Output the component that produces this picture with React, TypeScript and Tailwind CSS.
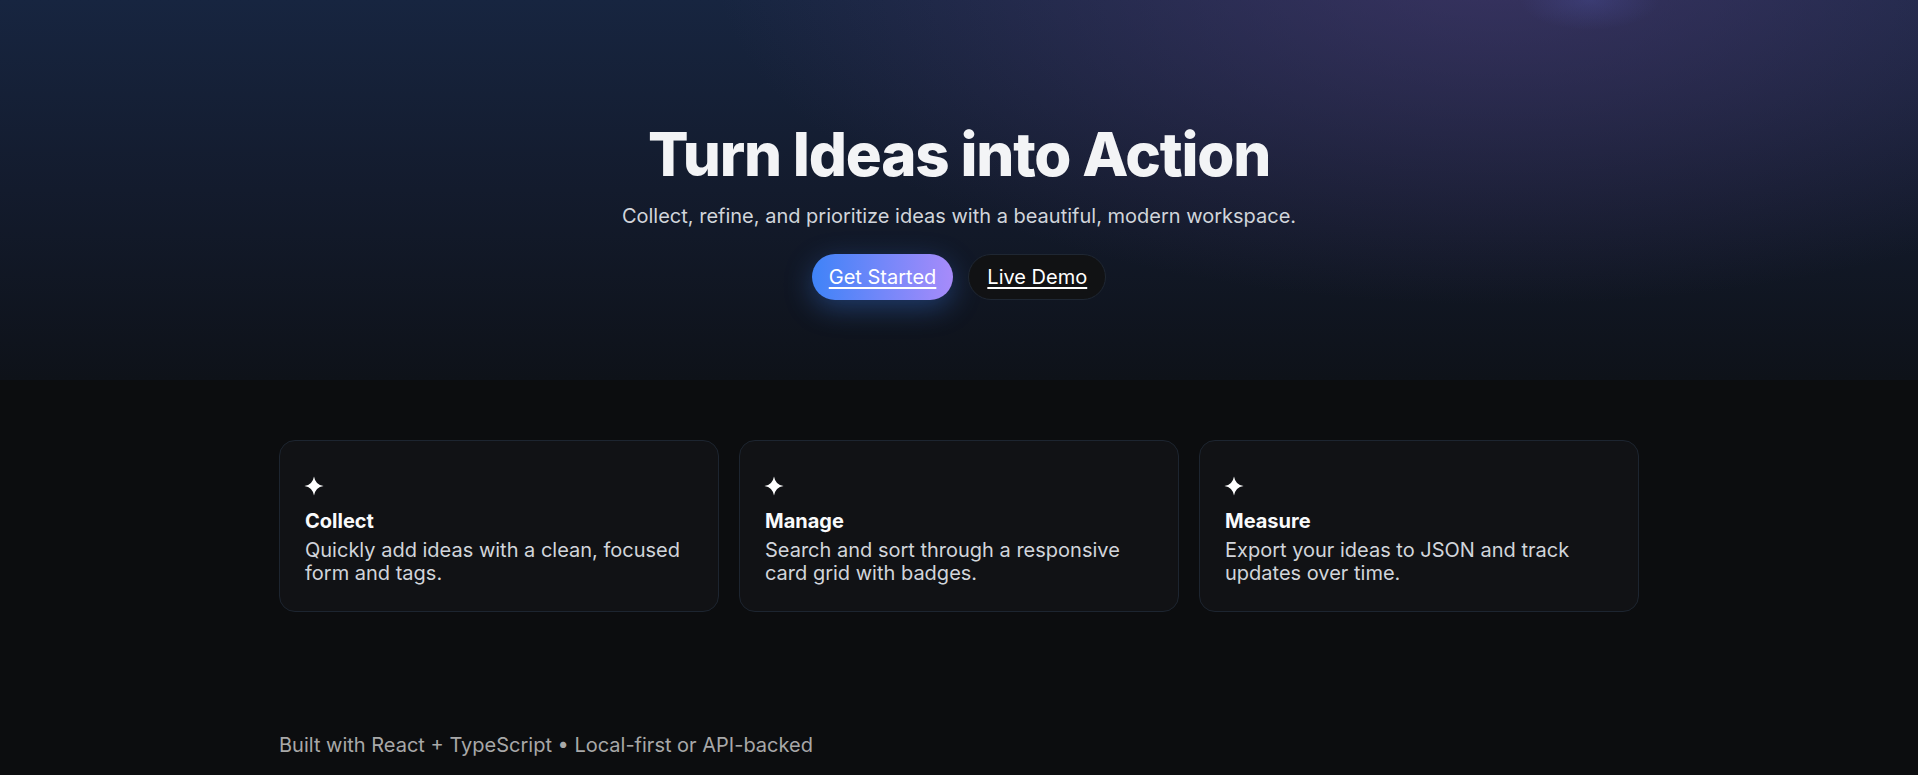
import React from "react";

function Sparkle() {
  return (
    <svg viewBox="0 0 24 24" className="w-[20px] h-[20px] block" fill="#ffffff">
      <path d="M12 0.5Q13.6 10.4 23.5 12Q13.6 13.6 12 23.5Q10.4 13.6 0.5 12Q10.4 10.4 12 0.5Z" />
    </svg>
  );
}

const features = [
  { title: "Collect", desc: "Quickly add ideas with a clean, focused form and tags." },
  { title: "Manage", desc: "Search and sort through a responsive card grid with badges." },
  { title: "Measure", desc: "Export your ideas to JSON and track updates over time." },
];

export default function App() {
  return (
    <div
      className="min-h-screen w-full bg-[#0c0d0f] text-white overflow-hidden"
      style={{ fontFamily: "Inter, 'Noto Sans', sans-serif" }}
    >
      <section className="h-[380px] flex flex-col items-center pt-[124px] bg-[radial-gradient(ellipse_70px_30px_at_1590px_0px,rgba(90,100,200,0.22),transparent),radial-gradient(ellipse_1050px_460px_at_1500px_-40px,rgba(78,60,118,0.6),transparent_75%),linear-gradient(180deg,#172540_0%,#131b2d_50%,#0e1219_100%)]">
        <h1 className="text-[60px] leading-[60px] font-extrabold tracking-[-0.02em] text-[#f3f4f6]">
          Turn Ideas into Action
        </h1>
        <p className="mt-[18px] text-[20px] leading-[28px] text-[#d1d5db]">
          Collect, refine, and prioritize ideas with a beautiful, modern workspace.
        </p>
        <div className="mt-6 flex items-center gap-[15px]">
          <a
            href="#"
            className="h-[46px] px-[17px] flex items-center rounded-full text-[20px] text-white underline underline-offset-[3px] bg-[linear-gradient(90deg,#3f83f8,#a78bfa)] shadow-[0_8px_28px_rgba(59,130,246,0.35)]"
          >
            Get Started
          </a>
          <a
            href="#"
            className="h-[46px] px-[18px] flex items-center rounded-full text-[20px] text-white underline underline-offset-[3px] bg-[#111214] border border-[#1f2733]"
          >
            Live Demo
          </a>
        </div>
      </section>

      <main className="max-w-[1360px] mx-auto pt-[60px]">
        <div className="grid grid-cols-3 gap-5">
          {features.map((f) => (
            <div
              key={f.title}
              className="h-[172px] rounded-2xl border border-[#1d2530] bg-[#111215] px-[25px] pt-6"
            >
              <div className="mt-[11px] mb-[11px] -ml-px">
                <Sparkle />
              </div>
              <h3 className="text-[20px] leading-[28px] font-bold text-[#f9fafb]">{f.title}</h3>
              <p className="mt-1 text-[20px] leading-[23px] text-[#d1d5db]">{f.desc}</p>
            </div>
          ))}
        </div>
        <p className="mt-[119px] text-[20px] leading-[28px] text-[#a8a8a8]">
          Built with React + TypeScript • Local-first or API-backed
        </p>
      </main>
    </div>
  );
}
